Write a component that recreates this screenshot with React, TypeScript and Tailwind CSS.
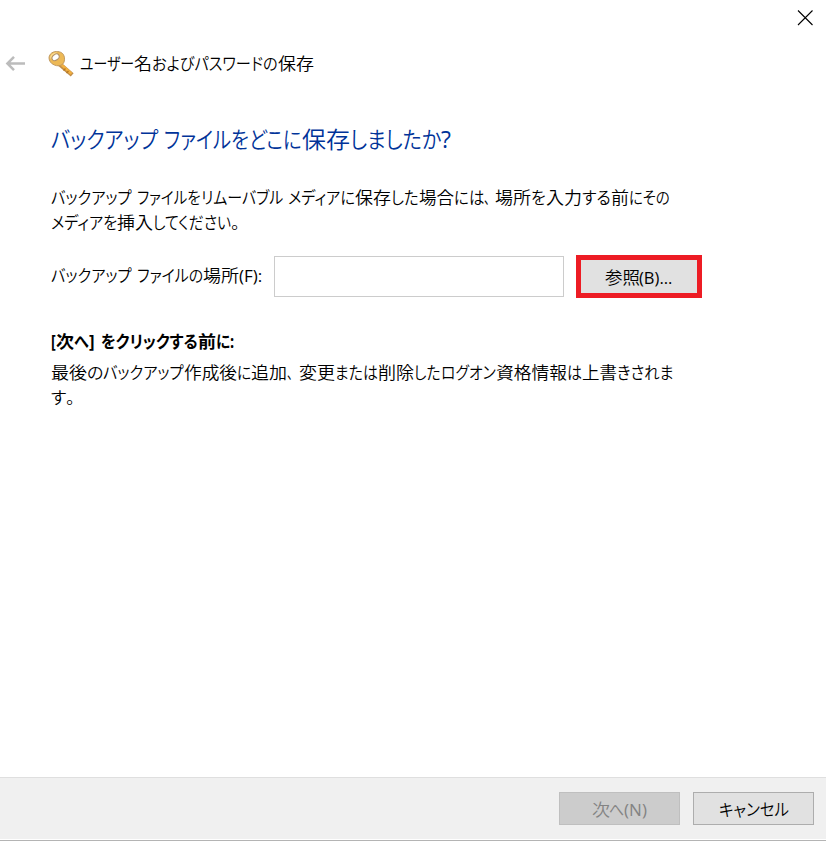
import { useLayoutEffect, useRef } from "react";

// [text, advance width in px, extra classes]
type Run = [string, number, string?];

type FitRunProps = {
  text: string;
  width: number;
  className?: string;
};

const FitRun = ({ text, width, className = "" }: FitRunProps) => {
  const ref = useRef<HTMLSpanElement>(null);

  // Squeeze the proportional kana down to dialog font widths
  useLayoutEffect(() => {
    const el = ref.current;
    if (!el) return;
    el.style.transform = `scaleX(${width / el.offsetWidth})`;
  }, [text, width]);

  return (
    <span className={`block shrink-0 ${className}`} style={{ width }}>
      <span ref={ref} className="inline-block origin-left whitespace-pre">
        {text}
      </span>
    </span>
  );
};

const Line = ({ runs, className }: { runs: Run[]; className?: string }) => (
  <span className={`flex ${className ?? ""}`}>
    {runs.map(([text, width, extra], i) => (
      <FitRun key={i} text={text} width={width} className={extra} />
    ))}
  </span>
);

const header: Run[] = [
  ["ユーザー", 54],
  ["名", 18],
  ["およびパスワードの", 126],
  ["保存", 36],
];

const title: Run[] = [
  ["バックアップ", 107],
  [" ", 6],
  ["ファイルをどこに", 138],
  ["保存", 48],
  ["しましたか", 91],
  ["?", 10, "font-normal"],
];

const mediaFirst: Run[] = [
  ["バックアップ", 81],
  [" ", 5],
  ["ファイルを", 64],
  ["リムーバブル", 82],
  [" ", 5],
  ["メディアに", 67],
  ["保存", 36],
  ["した", 28],
  ["場合", 35],
  ["には", 30],
  ["、", 6],
  [" ", 5],
  ["場所", 36],
  ["を", 15],
  ["入力", 36],
  ["する", 29],
  ["前", 18],
  ["にその", 41],
];

const mediaSecond: Run[] = [
  ["メディアを", 66],
  ["挿入", 36],
  ["してください", 78],
  ["。", 9],
];

const location: Run[] = [
  ["バックアップ", 81],
  [" ", 5],
  ["ファイルの", 66],
  ["場所", 36],
  ["(F):", 23, "font-normal"],
];

const beforeNext: Run[] = [
  ["[", 5],
  ["次", 18],
  ["へ", 15],
  ["]", 6],
  [" ", 6],
  ["をクリックする", 97],
  ["前", 18],
  ["に:", 18],
];

const noteFirst: Run[] = [
  ["最後", 36],
  ["の", 16],
  ["バックアップ", 81],
  ["作成後", 53],
  ["に", 14],
  ["追加", 36],
  ["、", 6],
  [" ", 6],
  ["変更", 36],
  ["または", 43],
  ["削除", 36],
  ["した", 27],
  ["ログオン", 55],
  ["資格情報", 71],
  ["は", 15],
  ["上書", 35],
  ["きされま", 57],
];

const noteSecond: Run[] = [
  ["す", 15],
  ["。", 9],
];

const browse: Run[] = [
  ["参照", 35],
  ["(B)...", 33, "font-normal"],
];

const next: Run[] = [
  ["次", 18],
  ["へ", 15],
  ["(N)", 23, "font-normal"],
];

const BackArrow = () => (
  <svg width="20" height="16" viewBox="0 0 20 16" fill="none">
    <path
      d="M20 7.5H2.5M9 .9L2.4 7.5 9 14.1"
      stroke="#bcbcbc"
      strokeWidth="2.5"
    />
  </svg>
);

const KeyIcon = () => (
  <svg width="26" height="26" viewBox="0 0 26 26" fill="none">
    <path d="M12 13.5L22.5 22.5" stroke="#c08c48" strokeWidth="4.4" strokeLinecap="square" />
    <path d="M12 12.5L22.5 21.8" stroke="#f2b040" strokeWidth="2.6" strokeLinecap="square" />
    <path d="M15.5 19.5l2-2M18.5 22l2-2" stroke="#b87820" strokeWidth="1.3" />
    <path
      d="M5.5 1C9-.2 13.8.7 15.5 3.7c1.7 3 1.3 7.4-.8 9.4-2 1.9-5.5 2.2-8.3.9C3 12.8 1 9.8 1 6.8 1 4.1 3 1.9 5.5 1z"
      fill="#edb956"
      stroke="#c29a60"
      strokeWidth="1"
    />
    <path d="M2.8 7.5C2.4 4.5 5 2.4 8.5 2" stroke="#fbdc94" strokeWidth="1.3" />
    <ellipse
      cx="7.6"
      cy="6.3"
      rx="3.9"
      ry="2.8"
      transform="rotate(-38 7.6 6.3)"
      fill="#fff"
      stroke="#b09068"
      strokeWidth="1"
    />
  </svg>
);

const CloseIcon = () => (
  <svg width="16" height="16" viewBox="0 0 16 16" fill="none">
    <path d="M1 .5l14.5 14.5M15.5.5L1 15" stroke="#000" strokeWidth="1.1" />
  </svg>
);

export default function App() {
  return (
    <div className="flex h-[841px] w-[826px] flex-col overflow-hidden bg-white font-['Open_Sans','Noto_Sans_CJK_JP',sans-serif] text-[17px] leading-[25px] font-[350] text-black [font-feature-settings:'palt']">
      <div className="flex h-9 justify-end pt-[10px] pr-[13px]">
        <button aria-label="閉じる" className="h-4">
          <CloseIcon />
        </button>
      </div>

      <header className="flex h-14 items-center pl-[5px]">
        <BackArrow />
        <span className="ml-[23px] -mt-px">
          <KeyIcon />
        </span>
        <Line runs={header} className="-mt-0.5 ml-[6px]" />
      </header>

      <main className="flex flex-1 flex-col pl-[51px]">
        <h1 className="mt-[30px] text-[23px] leading-[34px] font-[350] text-[#003399]">
          <Line runs={title} />
        </h1>

        <div className="mt-[29px]">
          <Line runs={mediaFirst} />
          <Line runs={mediaSecond} />
        </div>

        <div className="mt-[20px] flex h-[43px] items-center">
          <Line runs={location} className="w-[223px] -mt-[3px]" />
          <input
            type="text"
            className="h-[41px] w-[290px] border border-[#cccccc] bg-white px-2 outline-none"
          />
          <button className="ml-3 flex h-[43px] w-[126px] items-center justify-center border-[5px] border-[#ed1c24] bg-[#e1e1e1] pt-px pr-0.5">
            <Line runs={browse} />
          </button>
        </div>

        <div className="mt-[31px] font-bold">
          <Line runs={beforeNext} />
        </div>
        <div className="mt-[6px]">
          <Line runs={noteFirst} />
          <Line runs={noteSecond} />
        </div>
      </main>

      <footer className="flex h-[62px] items-start justify-end gap-[13px] border-t border-[#dfdfdf] bg-[#f0f0f0] pt-[14px] pr-3">
        <button
          disabled
          className="flex h-[33px] w-[121px] items-center justify-center border border-[#bfbfbf] bg-[#cccccc] pt-0.5 pr-px text-[#838383]"
        >
          <Line runs={next} />
        </button>
        <button className="flex h-[33px] w-[121px] items-center justify-center border border-[#adadad] bg-[#e1e1e1] pt-0.5">
          <Line runs={[["キャンセル", 70]]} />
        </button>
      </footer>
      <div className="h-0.5 border-b border-[#b4b4b4] bg-white" />
    </div>
  );
}
